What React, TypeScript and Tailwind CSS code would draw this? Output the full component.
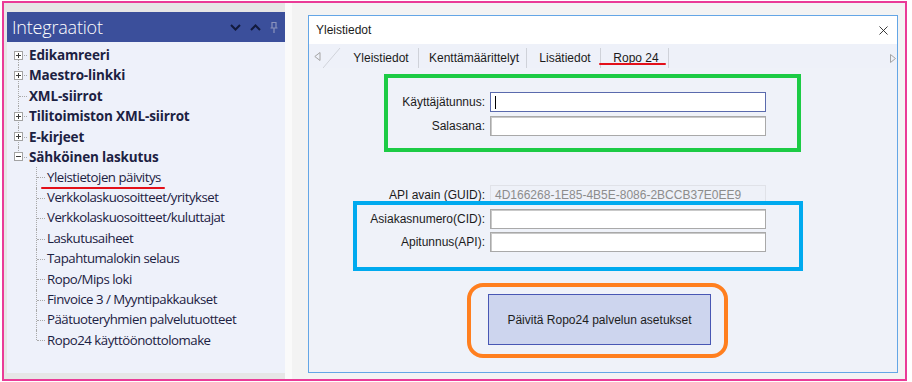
import { X } from "lucide-react";

const top = [
  { label: "Edikamreeri", box: "plus" },
  { label: "Maestro-linkki", box: "plus" },
  { label: "XML-siirrot", box: null },
  { label: "Tilitoimiston XML-siirrot", box: "plus" },
  { label: "E-kirjeet", box: "plus" },
  { label: "Sähköinen laskutus", box: "minus" },
];

const children = [
  "Yleistietojen päivitys",
  "Verkkolaskuosoitteet/yritykset",
  "Verkkolaskuosoitteet/kuluttajat",
  "Laskutusaiheet",
  "Tapahtumalokin selaus",
  "Ropo/Mips loki",
  "Finvoice 3 / Myyntipakkaukset",
  "Päätuoteryhmien palvelutuotteet",
  "Ropo24 käyttöönottolomake",
];

function ExpandBox({ kind }: { kind: string }) {
  return (
    <span className="absolute left-[7px] top-[5.5px] flex h-[9px] w-[9px] items-center justify-center border border-[#a3a3a3] bg-white">
      <span className="absolute h-px w-[5px] bg-[#3c3c3c]" />
      {kind === "plus" ? <span className="absolute h-[5px] w-px bg-[#3c3c3c]" /> : null}
    </span>
  );
}

function TreePanel() {
  return (
    <div className="flex flex-1 flex-col bg-[#eef1fa]">
      <header className="flex h-[30px] items-center justify-between bg-[#3b4f9b] pl-[5px] pr-[7px]">
        <span className="text-[18px] font-light tracking-[-0.2px] text-white">Integraatiot</span>
        <div className="flex items-center gap-[9px]">
          <svg width="11" height="7" viewBox="0 0 11 7"><path d="M1 1l4.5 4.5L10 1" fill="none" stroke="#121a3d" strokeWidth="2" /></svg>
          <svg width="11" height="7" viewBox="0 0 11 7"><path d="M1 6l4.5-4.5L10 6" fill="none" stroke="#121a3d" strokeWidth="2" /></svg>
          <svg width="8" height="11" viewBox="0 0 8 11"><path d="M2 0.5h4v5.5H2zM0.5 6h7M4 6v5" fill="none" stroke="#8b93bd" strokeWidth="1.2" /></svg>
        </div>
      </header>
      <div className="pt-[3px] font-['Open_Sans',sans-serif] text-[#1c2142]">
        {top.map((item, i) => (
          <div key={item.label} className="relative flex h-[20.4px] items-center pl-[22px] text-[13.5px] font-bold tracking-[-0.15px]">
            <span className={`absolute left-[11px] w-0 border-l border-dotted border-[#a9a9a9] ${i === 0 ? "top-[10px] bottom-0" : i === top.length - 1 ? "top-0 h-[10px]" : "top-0 bottom-0"}`} />
            <span className="absolute left-[12px] top-[10px] w-[8px] border-t border-dotted border-[#a9a9a9]" />
            {item.box ? <ExpandBox kind={item.box} /> : null}
            <span className="relative">{item.label}</span>
          </div>
        ))}
        {children.map((label, i) => (
          <div key={label} className="relative flex h-[20.4px] items-center pl-[40px] text-[13.25px] tracking-[-0.5px]">
            <span className={`absolute left-[29px] w-0 border-l border-dotted border-[#a9a9a9] ${i === children.length - 1 ? "top-0 h-[10px]" : "top-0 bottom-0"}`} />
            <span className="absolute left-[30px] top-[10px] w-[8px] border-t border-dotted border-[#a9a9a9]" />
            <span className="relative">
              {label}
              {i === 0 ? <span className="absolute -left-[6px] -right-[4px] top-[19px] h-[2px] rounded-full bg-[#e3101a]" /> : null}
            </span>
          </div>
        ))}
      </div>
    </div>
  );
}

function Field({ label, value, focused, disabled }: { label: string; value?: string; focused?: boolean; disabled?: boolean }) {
  return (
    <div className="flex h-[20px] items-center">
      <span className="w-[176px] text-right">{label}</span>
      <div
        className={`ml-[5px] flex h-[20px] w-[276px] items-center px-[4px] ${
          disabled ? "border border-[#e0e2e8] bg-[#eef1f8] text-[#8c8c8c]" : focused ? "border border-[#5a6aad] bg-white" : "border border-[#a9a9a9] bg-white shadow-[inset_1px_1px_0_#c9c9c9]"
        }`}
      >
        {focused ? <span className="h-[13px] w-px bg-black" /> : value}
      </div>
    </div>
  );
}

function Tab({ label, width, active }: { label: string; width: string; active?: boolean }) {
  return (
    <div className={`relative flex h-[20px] items-center justify-center border-r border-[#cfd2d9] ${width}`}>
      <span className="relative pl-[3px]">
        {label}
        {active ? <span className="absolute -left-[11px] -right-[7px] top-[14px] h-[2px] rounded-full bg-[#e3101a]" /> : null}
      </span>
    </div>
  );
}

function SettingsDialog() {
  return (
    <div className="flex flex-1 flex-col border border-[#64a6e6] font-['Liberation_Sans',Arial,sans-serif] text-[12px] text-[#1b1b1b]">
      <div className="flex h-[28px] items-center justify-between bg-white pl-[7px] pr-[6px]">
        <span>Yleistiedot</span>
        <X className="h-[15px] w-[15px] text-[#202020]" strokeWidth={1.4} />
      </div>
      <div className="relative flex h-[24px] items-end bg-[#eef1f9] pl-[5px]">
        <svg className="mb-[7px]" width="7" height="9" viewBox="0 0 7 9"><path d="M6 0.5v8L0.8 4.5z" fill="none" stroke="#a4a4a4" /></svg>
        <svg className="ml-[2px]" width="18" height="21" viewBox="0 0 18 21"><path d="M0 21L17 1" stroke="#d0d3da" /></svg>
        <div className="flex">
          <Tab label="Yleistiedot" width="w-[78px]" />
          <Tab label="Kenttämäärittelyt" width="w-[108px]" />
          <Tab label="Lisätiedot" width="w-[74px]" />
          <Tab label="Ropo 24" width="w-[68px]" active />
        </div>
        <svg className="absolute right-[1px] top-[10px]" width="6" height="9" viewBox="0 0 6 9"><path d="M0.5 0.5v8L5.5 4.5z" fill="none" stroke="#a4a4a4" /></svg>
      </div>
      <div className="relative flex-1 bg-[#eff2f9]">
        <div className="flex flex-col pt-[24px]">
          <div className="flex flex-col gap-[4px]">
            <Field label="Käyttäjätunnus:" focused />
            <Field label="Salasana:" />
          </div>
          <div className="mt-[49px] flex flex-col gap-[3.5px]">
            <Field label="API avain (GUID):" value="4D166268-1E85-4B5E-8086-2BCCB37E0EE9" disabled />
            <Field label="Asiakasnumero(CID):" />
            <Field label="Apitunnus(API):" />
          </div>
          <button className="ml-[179px] mt-[42px] flex h-[51px] w-[223px] items-center justify-center border border-[#4857b4] bg-[#cdd5ee] text-[12px] text-[#1d1d1d]">
            Päivitä Ropo24 palvelun asetukset
          </button>
        </div>
        <div className="absolute left-[75px] top-[6px] h-[78px] w-[417px] border-[4.5px] border-[#1ccb45]" />
        <div className="absolute left-[44px] top-[133px] h-[70px] w-[450px] border-[4.5px] border-[#00aaef]" />
        <div className="absolute left-[158px] top-[215px] h-[75px] w-[261px] rounded-[16px] border-[4.5px] border-[#ff7f1f]" />
      </div>
    </div>
  );
}

export default function App() {
  return (
    <div className="h-[382px] w-[912px] bg-white pb-[1px] pl-[2px] pr-[5px] pt-[1px] font-['Open_Sans',sans-serif]">
      <div className="flex h-full border-2 border-[#ea3b97] bg-[#e6e6e6]">
        <div className="flex w-[281px] flex-col pb-[6px] pl-[3px] pt-[9px]">
          <TreePanel />
        </div>
        <div className="w-[7px] bg-[#fafafa]" />
        <div className="flex flex-1 flex-col bg-[#f3f3f3] pb-[6px] pl-[16px] pr-[7px] pt-[12px]">
          <SettingsDialog />
        </div>
      </div>
    </div>
  );
}
